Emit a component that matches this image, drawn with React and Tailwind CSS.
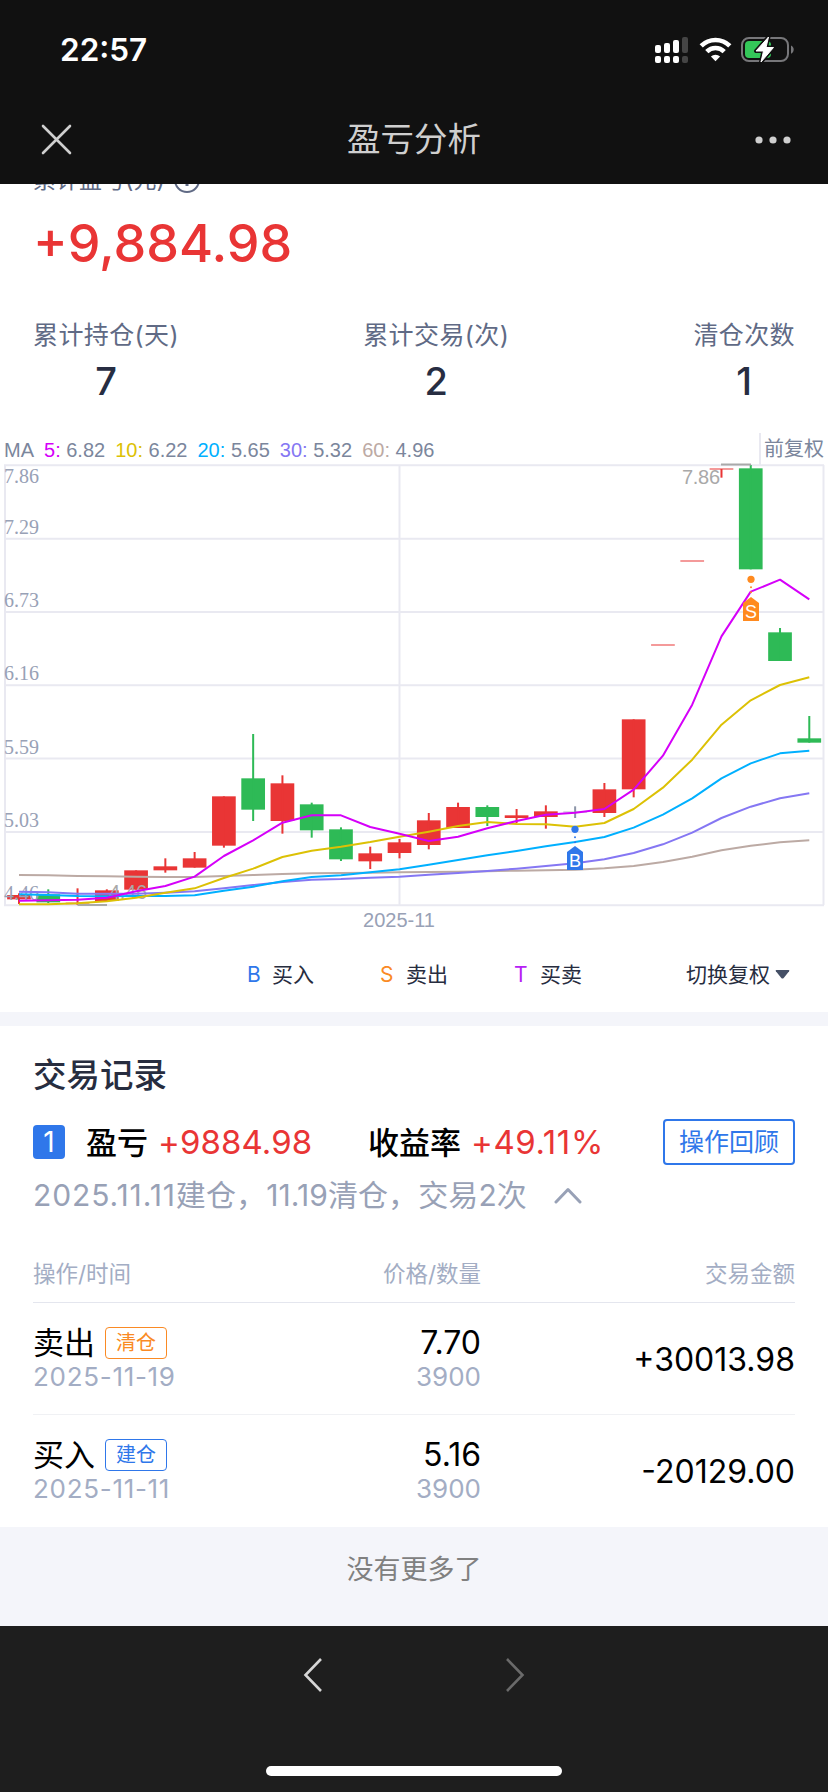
import { Fragment } from 'react';

const RED = '#e93535';
const GREEN = '#2eba56';
const GRID = '#e9e9f1';

// chart geometry, the svg starts at the top grid line
const STEP = 29.27;
const FIRST_X = 19;
const BODY_WIDTH = 23.7;
const toX = (i) => FIRST_X + i * STEP;
const toY = (v) => 215 + v / 3;

// [top, bottom, high, low, color]
const candles = [
  [645, 658, 640, 672, RED],
  [643, 667, 628, 669, GREEN],
  [667, 673, 625, 675, RED],
  [631, 663, 628, 665, RED],
  [571, 629, 571, 629, RED],
  [559, 571, 535, 578, RED],
  [535, 563, 516, 563, RED],
  [349, 497, 349, 503, RED],
  [295, 389, 162, 423, GREEN],
  [310, 423, 286, 461, RED],
  [373, 451, 368, 473, GREEN],
  [448, 538, 442, 543, GREEN],
  [520, 544, 500, 567, RED],
  [487, 519, 477, 535, RED],
  [421, 495, 399, 508, RED],
  [381, 444, 368, 444, RED],
  [381, 411, 376, 438, GREEN],
  [406, 414, 387, 429, RED],
  [394, 411, 376, 446, RED],
  [394, 398, 379, 414, '#8c95a8'],
  [328, 399, 309, 411, RED],
  [118, 328, 118, 352, RED],
  [-108, -102, -105, -105, RED],
  [-360, -354, -357, -357, RED],
  [-636, -630, -633, -607, RED],
  [-635, -332, -645, -332, GREEN],
  [-143, -57, -156, -57, GREEN],
  [175, 188, 108, 188, GREEN],
];

const averages = [
  {
    period: 60,
    value: '4.96',
    color: '#bcaaa4',
    points: [585, 586, 588, 589, 590, 591, 591, 588, 585, 582, 580, 579, 578, 577, 576, 575, 574, 572, 571, 569, 565, 558, 546, 530, 511, 497, 487, 481],
  },
  {
    period: 30,
    value: '5.32',
    color: '#8577f3',
    points: [635, 637, 641, 641, 641, 638, 634, 625, 615, 606, 599, 597, 593, 590, 584, 579, 573, 566, 558, 550, 538, 519, 493, 458, 414, 380, 355, 340],
  },
  {
    period: 20,
    value: '5.65',
    color: '#00b0ff',
    points: [643, 645, 648, 649, 648, 648, 646, 632, 620, 604, 591, 586, 577, 568, 554, 540, 526, 513, 499, 486, 471, 443, 404, 355, 295, 250, 220, 212],
  },
  {
    period: 10,
    value: '6.22',
    color: '#dcc105',
    points: [673, 673, 670, 664, 653, 638, 625, 594, 566, 531, 512, 500, 486, 470, 455, 438, 426, 432, 433, 440, 429, 387, 323, 239, 134, 61, 15, -8],
  },
  {
    period: 5,
    value: '6.82',
    color: '#d500f9',
    points: [662, 661, 659, 653, 634, 618, 590, 528, 481, 428, 406, 406, 441, 461, 483, 470, 445, 423, 404, 398, 387, 329, 227, 74, -131, -265, -301, -242],
  },
];

const priceLabels = ['7.86', '7.29', '6.73', '6.16', '5.59', '5.03', '4.46'];

const stats = [
  { label: '累计持仓(天)', value: 7 },
  { label: '累计交易(次)', value: 2 },
  { label: '清仓次数', value: 1 },
];

const trades = [
  { type: '卖出', tag: '清仓', tagClass: 'border-[#fa8a24] text-[#fa8a24]', date: '2025-11-19', price: '7.70', count: 3900, amount: '+30013.98' },
  { type: '买入', tag: '建仓', tagClass: 'border-[#2f77ea] text-[#2f77ea]', date: '2025-11-11', price: '5.16', count: 3900, amount: '-20129.00' },
];

const StatusIcons = () => (
  <svg width="150" height="40" viewBox="650 30 150 40" fill="none">
    <g fill="#fff">
      <rect x="655" y="45" width="6" height="8" rx="2" />
      <rect x="664" y="43" width="6" height="10" rx="2" />
      <rect x="673" y="40" width="6" height="13" rx="2" />
      <rect x="655" y="56" width="6" height="7" rx="2" />
      <rect x="664" y="56" width="6" height="7" rx="2" />
      <rect x="673" y="56" width="6" height="7" rx="2" />
    </g>
    <g fill="#454545">
      <rect x="682" y="37" width="6" height="16" rx="2" />
      <rect x="682" y="56" width="6" height="7" rx="2" />
    </g>
    <g stroke="#fff" strokeWidth="4.6">
      <path d="M701.2 45.8a20.4 20.4 0 0 1 28.6 0" />
      <path d="M706.8 51.6a12.4 12.4 0 0 1 17.4 0" />
    </g>
    <path d="M715.5 61.2l-4.6-4.7a6.6 6.6 0 0 1 9.2 0z" fill="#fff" />
    <rect x="742" y="38" width="46" height="23" rx="7" stroke="#77777a" strokeWidth="2" />
    <path d="M791 45.5c3.6 1.6 3.6 6.6 0 8.2z" fill="#77777a" />
    <rect x="745" y="41" width="26" height="17" rx="4" fill="#34c759" />
    <path d="M768.5 37l-12.5 14h7.5l-2.5 11 12.5-14.5h-7.5z" fill="#fff" stroke="#111" strokeWidth="4" strokeLinejoin="round" />
    <path d="M768.5 37l-12.5 14h7.5l-2.5 11 12.5-14.5h-7.5z" fill="#fff" stroke="#fff" strokeWidth="1" strokeLinejoin="round" />
  </svg>
);

const Header = () => (
  <header className="h-[184px] shrink-0 bg-[#111111]">
    <div className="flex h-[100px] items-center justify-between pr-[28px] pl-[60px]">
      <span className="text-[31.5px] leading-none font-semibold text-white">22:57</span>
      <StatusIcons />
    </div>
    <div className="grid h-[79px] grid-cols-3 items-center px-[41px] text-[#cfcfcf]">
      <svg width="31" height="31" viewBox="0 0 31 31" stroke="currentColor" strokeWidth="2.6" strokeLinecap="round">
        <path d="M2 2l27 27M29 2L2 29" />
      </svg>
      <h1 className="text-center text-[33.5px] leading-none whitespace-nowrap">盈亏分析</h1>
      <svg className="mr-[-4px] justify-self-end" width="36" height="8" viewBox="0 0 36 8" fill="currentColor">
        <circle cx="4" cy="4" r="3.6" />
        <circle cx="18" cy="4" r="3.6" />
        <circle cx="32" cy="4" r="3.6" />
      </svg>
    </div>
  </header>
);

const Summary = () => (
  <section className="px-[33px]">
    <div className="flex h-[16px] items-end overflow-hidden">
      <div className="flex h-[40px] shrink-0 items-center gap-[9px] text-[23px] leading-[40px] text-[#606a85]">
        <span>累计盈亏(元)</span>
        <svg className="mb-[1px]" width="26" height="26" viewBox="0 0 26 26" fill="none" stroke="currentColor" strokeWidth="2">
          <circle cx="13" cy="13" r="12" />
          <path d="M13 6v3M13 11v8" strokeWidth="3" />
        </svg>
      </div>
    </div>
    <div className="mt-[14px] h-[60px] text-[52px] leading-[60px] font-medium text-[#e93535]">+9,884.98</div>
    <div className="mt-[43px] flex justify-between">
      {stats.map((item) => (
        <div key={item.label} className="flex flex-col items-center">
          <span className="text-[25px] leading-[36px] tracking-[0.4px] text-[#606a85]">{item.label}</span>
          <span className="mt-[4px] text-[38px] leading-[48px] font-medium text-[#272d42]">{item.value}</span>
        </div>
      ))}
    </div>
  </section>
);

const Marker = ({ x, y, tagY, label, color }) => (
  <g fill={color}>
    <circle cx={x} cy={y} r="3.6" />
    <circle cx={x} cy={y + 8} r="1" />
    <circle cx={x} cy={y + 13} r="1" />
    <path d={`M${x} ${tagY}l8 6v18h-16v-18z`} />
    <text x={x} y={tagY + 20.5} fill="#fff" fontSize="18" textAnchor="middle">{label}</text>
  </g>
);

const KLineChart = () => (
  <svg className="block overflow-visible" width="828" height="475" viewBox="0 0 828 475" fontFamily="'Liberation Sans', Arial, sans-serif" fontSize="20">
    <g stroke={GRID} strokeWidth="2">
      {priceLabels.map((label, i) => (
        <path key={label} d={`M4 ${0.3 + i * 73.33}H824`} />
      ))}
      <path d="M5 0V440M399.5 0V440M823.5 0V440" />
    </g>
    {candles.map(([top, bottom, high, low, color], i) => {
      const flat = bottom - top < 7;
      return (
        <g key={i} fill={color}>
          <rect
            x={toX(i) - BODY_WIDTH / 2}
            y={toY(top)}
            width={BODY_WIDTH}
            height={(bottom - top) / 3}
            opacity={flat ? 0.5 : 1}
          />
          <rect x={toX(i) - 1} y={toY(high)} width="2" height={(low - high) / 3} />
        </g>
      );
    })}
    <g fill="#98a1b6" fontFamily="'Liberation Serif', 'Times New Roman', serif">
      {priceLabels.map((label, i) => (
        <text key={label} x="4" y={i === 0 ? 18 : -4.5 + i * 73.33}>{label}</text>
      ))}
    </g>
    <g fill="#a9a9a9">
      <text x="682" y="19" textLength="38">7.86</text>
      <rect x="721" y="-1.5" width="30" height="2" />
      <text x="109" y="434" textLength="38">4.46</text>
      <rect x="77.5" y="439" width="29.5" height="2" />
    </g>
    <g fill="none" strokeWidth="2" strokeLinejoin="round">
      {averages.map(({ period, color, points }) => (
        <polyline key={period} stroke={color} points={points.map((v, i) => `${toX(i)},${toY(v)}`).join(' ')} />
      ))}
    </g>
    <Marker x={575} y={364.3} tagY={381} label="B" color="#2f77ea" />
    <Marker x={751} y={114.3} tagY={132} label="S" color="#ff8a1f" />
    <text x="399" y="462" fill="#98a1b6" textAnchor="middle">2025-11</text>
  </svg>
);

const ChartPanel = () => (
  <section className="mt-[28px]">
    <div className="flex h-[32px] items-center justify-between pl-[4px] font-['Liberation_Sans','Noto_Sans_CJK_SC',sans-serif] text-[20px] leading-none text-[#7b869c]">
      <div className="flex gap-[10px] pt-px whitespace-nowrap">
        <span>MA</span>
        {[...averages].reverse().map(({ period, value, color }) => (
          <span key={period}>
            <span style={{ color }}>{period}:</span> {value}
          </span>
        ))}
      </div>
      <div className="flex h-full items-center border-l-2 border-[#e9e9f1] pr-[4px] pl-[3px]">前复权</div>
    </div>
    <KLineChart />
    <div className="flex h-[70px] items-center pr-[38px] pb-px pl-[247px] text-[21px] leading-none text-[#272d3f]">
      <span className="w-[25px] text-[#2f77ea]">B</span>
      <span className="w-[108px]">买入</span>
      <span className="w-[26px] text-[#fa8a24]">S</span>
      <span className="w-[108px]">卖出</span>
      <span className="w-[26px] text-[#b620f5]">T</span>
      <span>买卖</span>
      <span className="ml-auto flex items-center gap-[5px]">
        切换复权
        <svg width="15" height="9" viewBox="0 0 15 9" fill="#455066">
          <path d="M1.5 0h12q1.5 0 .6 1.3l-5.4 6.7q-1.2 1-2.4 0L.9 1.3Q0 0 1.5 0z" />
        </svg>
      </span>
    </div>
  </section>
);

const Records = () => (
  <section className="h-[501px] bg-white px-[33px] pt-[27px] text-black">
    <h2 className="text-[33.5px] leading-[44px] font-medium text-[#272d3f]">交易记录</h2>
    <div className="mt-[21px] flex h-[47px] items-center leading-none">
      <span className="flex h-[34px] w-[32px] items-center justify-center rounded-[4px] bg-[#2f77ea] text-[28px] text-white">1</span>
      <span className="ml-[21px] pt-px text-[31px] font-medium">盈亏</span>
      <span className="ml-[10px] w-[210px] pt-px text-[33px] tracking-[0.1px] text-[#e93535]">+9884.98</span>
      <span className="pt-px text-[31px] font-medium">收益率</span>
      <span className="ml-[10px] pt-px text-[33px] tracking-[0.6px] text-[#e93535]">+49.11%</span>
      <button className="ml-auto flex h-[46px] w-[132px] items-center justify-center rounded-[4px] border-2 border-[#2f77ea] pt-px text-[25px] text-[#2f77ea]">操作回顾</button>
    </div>
    <div className="mt-[8px] flex h-[44px] items-center text-[30px] text-[#98a1b6]">
      <span className="w-[521px] pt-px tracking-[0.1px] whitespace-nowrap">
        <span className="tracking-[0.9px]">2025.11.11</span>建仓，11.19清仓，交易2次
      </span>
      <svg width="28" height="17" viewBox="0 0 28 17" fill="none" stroke="currentColor" strokeWidth="3" strokeLinecap="round" strokeLinejoin="round">
        <path d="M2 15L14 2.5 26 15" />
      </svg>
    </div>
    <div className="mt-[28px] grid h-[58px] grid-cols-[220px_228px_1fr] items-center border-b border-[#e4e6ee] text-[22.5px] text-[#a3adc4]">
      <span>操作/时间</span>
      <span className="text-right">价格/数量</span>
      <span className="text-right">交易金额</span>
    </div>
    {trades.map((trade, index) => (
      <Fragment key={trade.date}>
        {index > 0 && <div className="h-px bg-[#f0f1f4]" />}
        <div className="grid h-[111px] grid-cols-[220px_228px_1fr] items-center text-[32px]">
          <div>
            <div className="flex h-[37px] items-center leading-[37px]">
              <span className="text-[31px]">{trade.type}</span>
              <span className={`ml-[10px] flex h-[32px] w-[62px] items-center justify-center rounded-[4px] border text-[20px] leading-none ${trade.tagClass}`}>{trade.tag}</span>
            </div>
            <div className="text-[26px] leading-[32px] tracking-[0.7px] text-[#a3adc4]">{trade.date}</div>
          </div>
          <div className="text-right">
            <div className="leading-[37px]">{trade.price}</div>
            <div className="text-[26px] leading-[32px] text-[#a3adc4]">{trade.count}</div>
          </div>
          <div className="pt-[3px] text-right">{trade.amount}</div>
        </div>
      </Fragment>
    ))}
  </section>
);

const BottomBar = () => (
  <footer className="flex h-[166px] shrink-0 flex-col items-center justify-between bg-[#1e1e1e] pt-[31px] pb-[16px]">
    <div className="flex w-[222px] justify-between">
      <svg width="20" height="36" viewBox="0 0 20 36" fill="none" stroke="#d6d6d6" strokeWidth="2.6">
        <path d="M18 2L2.5 18 18 34" />
      </svg>
      <svg width="20" height="36" viewBox="0 0 20 36" fill="none" stroke="#6a6a6a" strokeWidth="2.6">
        <path d="M2 2l15.5 16L2 34" />
      </svg>
    </div>
    <div className="h-[10px] w-[296px] rounded-full bg-white" />
  </footer>
);

export default function App() {
  return (
    <div className="flex h-[1792px] w-[828px] flex-col overflow-hidden bg-white font-['Inter','Noto_Sans_CJK_SC',sans-serif]">
      <Header />
      <main className="flex-1 bg-[#f4f5fa]">
        <div className="h-[828px] bg-white">
          <Summary />
          <ChartPanel />
        </div>
        <div className="h-[14px]" />
        <Records />
        <p className="pt-[23px] text-center text-[27px] leading-[40px] text-[#808080]">没有更多了</p>
      </main>
      <BottomBar />
    </div>
  );
}
